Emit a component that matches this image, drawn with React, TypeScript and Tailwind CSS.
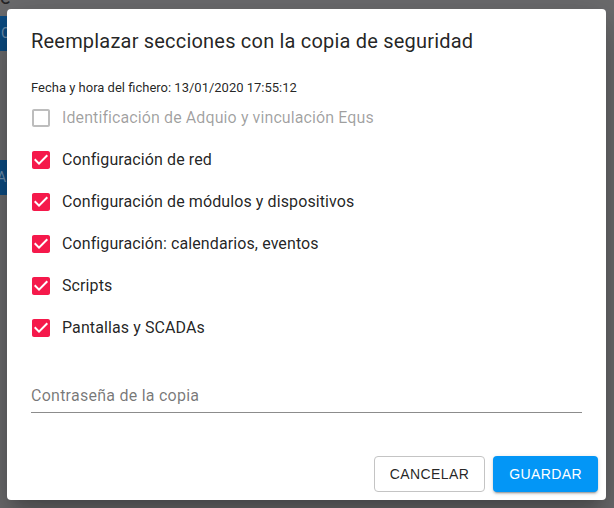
import React from "react";

const sections = [
  { label: "Identificación de Adquio y vinculación Equs", checked: false, disabled: true },
  { label: "Configuración de red", checked: true },
  { label: "Configuración de módulos y dispositivos", checked: true },
  { label: "Configuración: calendarios, eventos", checked: true },
  { label: "Scripts", checked: true },
  { label: "Pantallas y SCADAs", checked: true },
];

function CheckIcon({ checked, disabled }: { checked: boolean; disabled?: boolean }) {
  if (checked) {
    return (
      <svg viewBox="0 0 24 24" className="w-6 h-6 -ml-[2px] shrink-0 fill-[#f5194b]">
        <path d="M19 3H5c-1.11 0-2 .9-2 2v14c0 1.1.89 2 2 2h14c1.11 0 2-.9 2-2V5c0-1.1-.89-2-2-2zm-9 14l-5-5 1.41-1.41L10 14.17l7.59-7.59L19 8l-9 9z" />
      </svg>
    );
  }
  return (
    <svg
      viewBox="0 0 24 24"
      className={`w-6 h-6 -ml-[2px] shrink-0 ${disabled ? "fill-[#bdbdbd]" : "fill-[#757575]"}`}
    >
      <path d="M19 5v14H5V5h14m0-2H5c-1.1 0-2 .9-2 2v14c0 1.1.9 2 2 2h14c1.1 0 2-.9 2-2V5c0-1.1-.9-2-2-2z" />
    </svg>
  );
}

export default function App() {
  return (
    <div className="relative w-[614px] h-[508px] overflow-hidden bg-[#6c6c6e] font-['Roboto',sans-serif]">
      {/* page behind the backdrop */}
      <div className="flex flex-col">
        <div className="-mt-[15px] h-[20px] text-[20px] leading-[24px] text-[#262628]">e</div>
        <div className="mt-[11px] w-[60px] h-[35px] bg-[#0c4c83] text-[#6d8fae] text-[14px] leading-[35px] pl-[1px]">
          C
        </div>
        <div className="mt-[109px] w-[60px] h-[35px] bg-[#0c4c83] text-[#6d8fae] text-[14px] leading-[35px] -ml-[3px]">
          A
        </div>
      </div>

      {/* dialog */}
      <div className="absolute left-[7px] top-[9px] w-[599px] h-[491px] bg-white rounded-[4px] shadow-[0_11px_15px_-7px_rgba(0,0,0,0.2),0_24px_38px_3px_rgba(0,0,0,0.14),0_9px_46px_8px_rgba(0,0,0,0.12)] flex flex-col">
        <h2 className="px-6 pt-4 pb-4 text-[20px] leading-8 tracking-[0.2px] font-normal text-[rgba(0,0,0,0.87)]">
          Reemplazar secciones con la copia de seguridad
        </h2>

        <div className="px-6 flex flex-col">
          <p className="mt-[5px] text-[13px] leading-[19px] text-[rgba(0,0,0,0.87)]">
            Fecha y hora del fichero: 13/01/2020 17:55:12
          </p>

          {sections.map((s) => (
            <label key={s.label} className="h-[42px] flex items-center">
              <CheckIcon checked={s.checked} disabled={s.disabled} />
              <span
                className={`ml-[9px] text-[16px] leading-6 tracking-[0.1px] ${
                  s.disabled ? "text-[rgba(0,0,0,0.38)]" : "text-[rgba(0,0,0,0.87)]"
                }`}
              >
                {s.label}
              </span>
            </label>
          ))}

          <div className="mt-[35px] h-[29px] border-b border-[#8c8c8c] flex items-start pt-[2px]">
            <span className="text-[16px] leading-[19px] tracking-[0.25px] text-[rgba(0,0,0,0.54)]">
              Contraseña de la copia
            </span>
          </div>
        </div>

        <div className="mt-[43px] px-2 flex justify-end gap-2">
          <button className="h-9 px-[15px] rounded-[4px] border border-[#c4c4c4] font-['Liberation_Sans',sans-serif] text-[14px] tracking-[0.4px] uppercase text-[rgba(0,0,0,0.87)]">
            Cancelar
          </button>
          <button className="h-9 px-4 rounded-[4px] bg-[#0396f6] font-['Liberation_Sans',sans-serif] text-[14px] tracking-[0.4px] uppercase text-white shadow-[0_3px_1px_-2px_rgba(0,0,0,0.2),0_2px_2px_0_rgba(0,0,0,0.14),0_1px_5px_0_rgba(0,0,0,0.12)]">
            Guardar
          </button>
        </div>
      </div>
    </div>
  );
}
